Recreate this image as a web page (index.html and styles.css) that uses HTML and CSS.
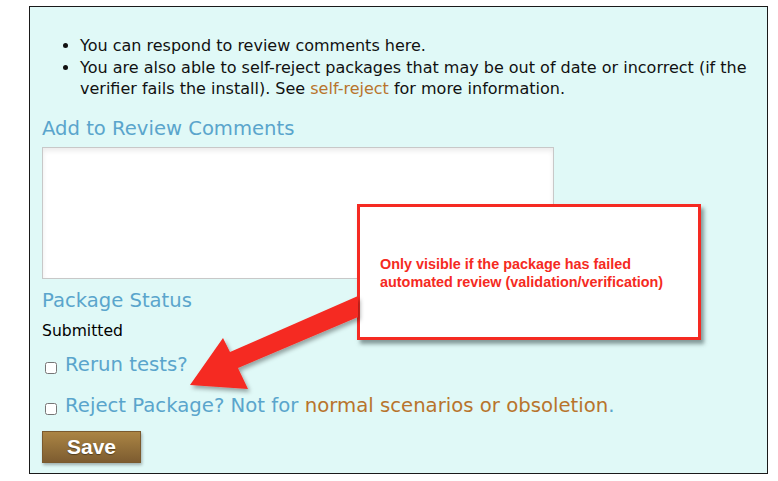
FILE: index.html
```html
<!DOCTYPE html>
<html>
<head>
<meta charset="utf-8">
<link rel="stylesheet" href="styles.css">
</head>
<body>
<div class="panel">
  <ul class="notes">
    <li>You can respond to review comments here.</li>
    <li>You are also able to self-reject packages that may be out of date or incorrect (if the verifier fails the install). See <a class="link" href="#">self-reject</a> for more information.</li>
  </ul>
  <h3 class="heading">Add to Review Comments</h3>
  <textarea class="comments"></textarea>
  <h3 class="heading status-heading">Package Status</h3>
  <div class="status">Submitted</div>
  <label class="check rerun"><input type="checkbox"><span>Rerun tests?</span></label>
  <label class="check reject"><input type="checkbox"><span>Reject Package? Not for <a class="link" href="#">normal</a> <a class="link" href="#">scenarios or obsoletion</a>.</span></label>
  <button class="save">Save</button>
</div>
<p class="below">Lorem ipsum dolor sit amet, consectetur adipiscing elit, sed do eiusmod tempor incididunt ut labore et dolore.</p>

<div class="callout">Only visible if the package has failed automated review (validation/verification)</div>
<svg class="arrow" width="778" height="481" viewBox="0 0 778 481">
  <defs>
    <filter id="sh" x="-20%" y="-20%" width="140%" height="140%">
      <feDropShadow dx="2" dy="3" stdDeviation="2" flood-color="#000" flood-opacity="0.35"/>
    </filter>
  </defs>
  <polygon filter="url(#sh)" fill="#f52a22" points="358,296 358,317 238,368 248,389 190,385 223,338 230,352"/>
</svg>
</body>
</html>
```
FILE: styles.css
```css
html, body {
  margin: 0;
  padding: 0;
  background: #ffffff;
  overflow: hidden;
  height: 481px;
}
body {
  font-family: "DejaVu Sans", Verdana, sans-serif;
  position: relative;
}
.panel {
  margin: 6px 0 0 29px;
  height: 466px;
  border: 1px solid #1a1a1a;
  background: #e0f9f7;
  padding: 0 0 0 12px;
  box-sizing: content-box;
  width: 725px;
  overflow: hidden;
}
.notes {
  margin: 0;
  padding: 28px 0 0 38px;
  font-size: 16px;
  line-height: 21.5px;
  color: #111;
}
.link {
  color: #b8742c;
  text-decoration: none;
}
.heading {
  margin: 16px 0 0 0;
  font-weight: normal;
  font-size: 19.6px;
  line-height: 26px;
  color: #5aa5cc;
}
.comments {
  display: block;
  margin: 5px 0 0 0;
  width: 512px;
  height: 132px;
  box-sizing: border-box;
  border: 1px solid #c8c8c8;
  background: #fff;
  box-shadow: inset 0 3px 5px rgba(0,0,0,0.08);
  resize: none;
}
.status-heading {
  margin-top: 9px;
}
.status {
  font-size: 15.6px;
  line-height: 20px;
  color: #000;
  margin-top: 7px;
}
.check {
  display: flex;
  align-items: center;
  gap: 8px;
  font-size: 19.7px;
  line-height: 26px;
  color: #5aa5cc;
}
.rerun {
  margin-top: 11px;
}
.reject {
  margin-top: 15px;
}
.check input {
  margin: 6px 0 0 3px;
  width: 12px;
  height: 12px;
}
.save {
  display: block;
  margin-top: 12px;
  width: 99px;
  height: 32px;
  border: 1px solid #7a5a2e;
  background: linear-gradient(#ab8544, #7d5c30);
  color: #fff;
  font-family: "Liberation Sans", Arial, sans-serif;
  font-weight: bold;
  font-size: 21px;
  text-shadow: 0 1px 1px rgba(0,0,0,0.4);
  box-shadow: 1px 2px 3px rgba(0,0,0,0.3);
  padding: 0;
}
.below {
  margin: 5px 0 0 36px;
  font-size: 13px;
  line-height: 16px;
  color: #c8c8c8;
  white-space: nowrap;
}
.callout {
  position: absolute;
  left: 357px;
  top: 204px;
  width: 344px;
  height: 136px;
  box-sizing: border-box;
  border: 3px solid #f52a22;
  background: #fff;
  box-shadow: 3px 4px 4px rgba(40,60,60,0.5);
  padding: 48px 20px 0 20px;
  font-family: "Liberation Sans", Arial, sans-serif;
  font-weight: bold;
  font-size: 14.4px;
  line-height: 18px;
  color: #f52a22;
}
.arrow {
  position: absolute;
  left: 0;
  top: 0;
  pointer-events: none;
}
```
